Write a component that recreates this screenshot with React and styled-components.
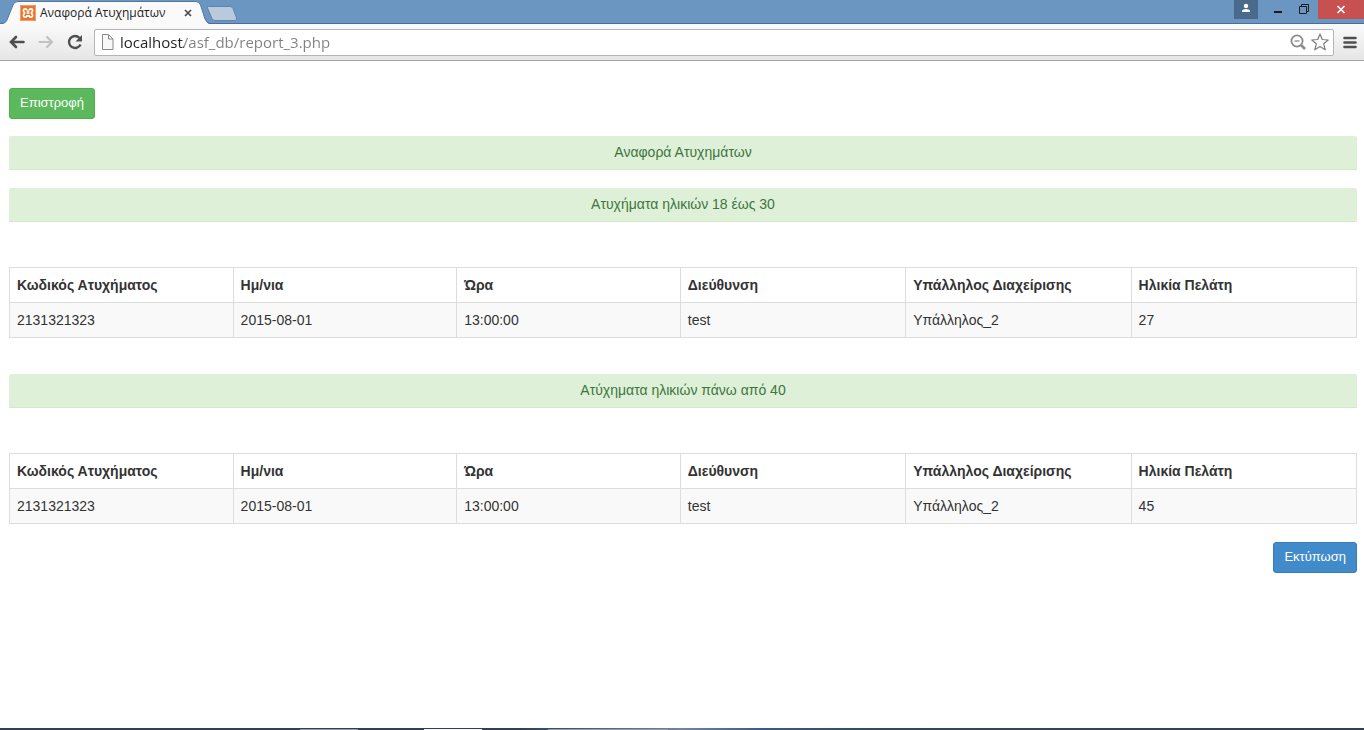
import React, {useState} from 'react'
import styled, {createGlobalStyle} from 'styled-components'

const GlobalStyle = createGlobalStyle `
  * {
    box-sizing: border-box;
  }
  body {
    margin: 0;
    background: #fff;
    color: #333;
    font: 14px/20px "Liberation Sans", Arial, sans-serif;
  }
`

const Window = styled.div `
  display: flex;
  flex-direction: column;
  min-height: 100vh;
`

/* Browser chrome */

const TitleBar = styled.header `
  display: flex;
  justify-content: space-between;
  height: 24px;
  background: #6b96c1;
  box-shadow: inset 0 -1px #466f9c;
`

const TabStrip = styled.div `
  display: flex;
  align-items: flex-end;
`

const TabEdge = styled.svg `
  display: block;
  flex: none;
  overflow: visible;
  width: ${p => p.width}px;
  height: 24px;
`

const Tab = styled.div `
  display: flex;
  align-items: center;
  width: 176px;
  height: 23px;
  background: #fafafa;
  border-top: 1px solid #54789f;
  font: 12px/20px "Open Sans", "Noto Sans", sans-serif;
  color: #222;
`

const TabTitle = styled.span `
  flex: 1;
  margin-left: 4px;
  white-space: nowrap;
`

const IconButton = styled.button `
  display: flex;
  align-items: center;
  justify-content: center;
  flex: none;
  width: ${p => p.$width}px;
  height: ${p => p.$height || 24}px;
  padding: 0;
  border: 0;
  background: ${p => p.$background || 'none'};
`

const WindowControls = styled.div `
  display: flex;
  align-items: flex-start;
`

const Toolbar = styled.div `
  display: flex;
  align-items: center;
  height: 37px;
  padding: 0 2px 0 3px;
  background: linear-gradient(#fafafa, #e6e6e6);
  border-bottom: 1px solid #a3a3a3;
`

const AddressBar = styled.div `
  display: flex;
  align-items: center;
  flex: 1;
  height: 27px;
  margin: 0 4px 0 5px;
  padding: 0 2px 0 6px;
  background: #fff;
  border: 1px solid #b5b5b5;
  border-radius: 2px;
`

/* The host part is darker than the path */
const Address = styled.input `
  flex: 1;
  min-width: 0;
  height: 24px;
  margin-left: 6px;
  padding: 0;
  border: 0;
  outline: 0;
  background: linear-gradient(90deg, #222 64px, #808080 64px);
  background-clip: text;
  -webkit-background-clip: text;
  -webkit-text-fill-color: transparent;
  color: #222;
  font: 15px/24px "Open Sans", "Noto Sans", sans-serif;
`

/* Report page */

const Page = styled.main `
  flex: 1;
  padding: 27px 7px 18px 9px;
`

const Button = styled.button `
  display: block;
  height: 31px;
  margin-left: ${p => p.$right ? 'auto' : '0'};
  padding: 0 10px 2px;
  border: 1px solid ${p => p.$primary ? '#357ebd' : '#4cae4c'};
  border-radius: 3px;
  background: ${p => p.$primary ? '#428bca' : '#5cb85c'};
  color: #fff;
  font: 13px/20px "Liberation Sans", Arial, sans-serif;
`

const Heading = styled.div `
  height: 34px;
  margin-top: ${p => p.$gap || 18}px;
  padding: 6px;
  background: #dff0d8;
  border-bottom: 1px solid #d6e9c6;
  border-radius: 2px 2px 0 0;
  color: #3c763d;
  text-align: center;
`

const Table = styled.table `
  width: 100%;
  margin: 45px 0 0;
  border-collapse: collapse;
  table-layout: fixed;
`

const Th = styled.th `
  padding: 7px;
  border: 1px solid #ddd;
  text-align: left;

  &:nth-child(-n + 3) {
    width: 16.6%;
  }
`

const Td = styled.td `
  padding: 7px;
  border: 1px solid #ddd;
  background: #f9f9f9;
`

const Actions = styled.div `
  margin-top: 18px;
`

const Taskbar = styled.footer `
  display: flex;
  height: 2px;
  padding-left: 300px;
  gap: 66px;
  background: linear-gradient(90deg, #2f4152 0 38%, #33506a 40%, #6f86a3 50%, #3a5b7d 56%, #2f4a5a 65%, #2b4250);
`

const TaskItem = styled.span `
  width: ${p => p.$wide ? 120 : 58}px;
  height: 1px;
  margin-top: 1px;
  background: ${p => p.$active ? '#f4f6f7' : '#8f9daa'};
`

const columns = [
  'Κωδικός Ατυχήματος',
  'Ημ/νια',
  'Ώρα',
  'Διεύθυνση',
  'Υπάλληλος Διαχείρισης',
  'Ηλικία Πελάτη'
]

const youngRows = [
  ['2131321323', '2015-08-01', '13:00:00', 'test', 'Υπάλληλος_2', '27']
]

const olderRows = [
  ['2131321323', '2015-08-01', '13:00:00', 'test', 'Υπάλληλος_2', '45']
]

const ReportTable = ({rows, label}) => <Table aria-label={label}>
  <thead>
    <tr>
      {columns.map(name => <Th key={name} scope="col">{name}</Th>)}
    </tr>
  </thead>
  <tbody>
    {
      rows.map((row, index) => <tr key={index}>
        {row.map((value, i) => <Td key={i}>{value}</Td>)}
      </tr>)
    }
  </tbody>
</Table>

const XamppIcon = () => <svg width="16" height="16" viewBox="0 0 16 16">
  <rect width="16" height="16" rx="1" fill="#e9752a"/>
  <rect x=".5" y=".5" width="15" height="15" rx="1" fill="none" stroke="#f0a068"/>
  <path d="M6.8 5.2C6.6 3.4 3.6 3.2 3.4 5.4C3.3 6.8 4.6 7.2 4.6 8C4.6 8.800 3.3 9.200 3.400 10.600C3.600 12.800 6.600 12.600 6.800 10.800H9.200C9.400 12.600 12.400 12.800 12.600 10.600C12.700 9.200 11.400 8.800 11.400 8C11.400 7.200 12.700 6.800 12.600 5.400C12.400 3.200 9.400 3.400 9.200 5.200" fill="none" stroke="#fff" strokeWidth="1.7" strokeLinejoin="round"/>
  <path d="M6.500 5.400L8 6.500L9.500 5.400M6.500 8H9.500" fill="none" stroke="#fff" strokeWidth="1.3"/>
</svg>

const Chrome = () => {
  let [address, setAddress] = useState('localhost/asf_db/report_3.php')
  return (<>
    <TitleBar>
      <TabStrip>
        <TabEdge width={20} viewBox="0 0 20 24">
          <path d="M0 24C5 24 6 22 7 20L13 5Q14 1.5 18 1.5H20V24Z" fill="#fafafa"/>
          <path d="M0 23.5C5 23.5 6 22 7 20L13 5Q14 1.5 18 1.5H20" fill="none" stroke="#54789f"/>
        </TabEdge>
        <Tab>
          <XamppIcon/>
          <TabTitle>Αναφορά Ατυχημάτων</TabTitle>
          <IconButton $width={16} $height={20} aria-label="Close tab">
            <svg width="8" height="8" viewBox="0 0 8 8">
              <path d="M1 1L7 7M7 1L1 7" stroke="#4a4a4a" strokeWidth="1.7"/>
            </svg>
          </IconButton>
        </Tab>
        <TabEdge width={10} viewBox="0 0 10 24">
          <path d="M0 1.5Q3 1.5 4.5 5L9 19Q11 24 14 24H0Z" fill="#fafafa"/>
          <path d="M0 1.5Q3 1.5 4.5 5L9 19Q11 23.5 14 23.5" fill="none" stroke="#54789f"/>
        </TabEdge>
        <IconButton $width={32} aria-label="New tab">
          <svg width="32" height="24" viewBox="0 0 32 24">
            <path d="M2.500 6.500H24Q26 6.500 27 8.500L30.500 18Q31 20.500 29 20.500H9Q7 20.500 6 18.500L1.500 8Q1 6.500 2.500 6.500Z" fill="#b9cadc" stroke="#6085ad"/>
          </svg>
        </IconButton>
      </TabStrip>
      <WindowControls>
        <IconButton $width={24} $height={19} $background="#4a6a8b" aria-label="Profile">
          <svg width="24" height="19" viewBox="0 0 24 19">
            <circle cx="12" cy="6" r="2.2" fill="#fff"/>
            <path d="M8 12V10.5Q9 9 12 9T16 10.5V12Z" fill="#fff"/>
          </svg>
        </IconButton>
        <IconButton $width={34} $height={19} aria-label="Minimize">
          <svg width="34" height="19" viewBox="0 0 34 19">
            <path d="M16 12H24" stroke="#1c1c1c" strokeWidth="2"/>
          </svg>
        </IconButton>
        <IconButton $width={26} $height={19} aria-label="Restore">
          <svg width="26" height="19" viewBox="0 0 26 19">
            <path d="M7.5 6.500H14.500V13.500H7.500ZM9.500 6V4.500H16.500V11.500H15" fill="none" stroke="#1c1c1c"/>
          </svg>
        </IconButton>
        <IconButton $width={46} $height={19} $background="#c75050" aria-label="Close">
          <svg width="46" height="19" viewBox="0 0 46 19">
            <path d="M19.5 6L26.5 13M26.5 6L19.5 13" stroke="#fff" strokeWidth="1.7"/>
          </svg>
        </IconButton>
      </WindowControls>
    </TitleBar>
    <Toolbar>
      <IconButton $width={28} aria-label="Back">
        <svg width="18" height="16" viewBox="0 0 18 16">
          <path d="M15.500 8H3.500M8 3L3 8L8 13" fill="none" stroke="#4f4f4f" strokeWidth="2.6" strokeLinecap="round"/>
        </svg>
      </IconButton>
      <IconButton $width={30} aria-label="Forward">
        <svg width="18" height="16" viewBox="0 0 18 16">
          <path d="M2.500 8H14.500M10 3L15 8L10 13" fill="none" stroke="#c2c2c2" strokeWidth="2.2" strokeLinecap="round"/>
        </svg>
      </IconButton>
      <IconButton $width={28} aria-label="Reload">
        <svg width="16" height="16" viewBox="0 0 16 16">
          <path d="M12.5 4A6 6 0 1 0 13.5 10.5" fill="none" stroke="#4f4f4f" strokeWidth="2.4"/>
          <path d="M15 1V7.5H8.5Z" fill="#4f4f4f"/>
        </svg>
      </IconButton>
      <AddressBar>
        <svg width="13" height="16" viewBox="0 0 13 16">
          <path d="M1.500 .5H7.500L12 5V15.500H1.500Z" fill="#f8f8f8" stroke="#8a8a8a"/>
          <path d="M7.500 .5V5H12" fill="none" stroke="#8a8a8a"/>
        </svg>
        <Address aria-label="Address" value={address} spellCheck={false} onChange={e => setAddress(e.target.value)}/>
        <IconButton $width={22} aria-label="Zoom">
          <svg width="16" height="16" viewBox="0 0 16 16">
            <circle cx="7" cy="7" r="5.6" fill="none" stroke="#8c8c8c" strokeWidth="1.8"/>
            <path d="M4.500 7H9.500" stroke="#8c8c8c" strokeWidth="1.3"/>
            <path d="M11 11L15 15" stroke="#8c8c8c" strokeWidth="2.6"/>
          </svg>
        </IconButton>
        <IconButton $width={22} aria-label="Bookmark">
          <svg width="18" height="18" viewBox="0 0 18 18">
            <path d="M9 1L11.2 6.5L17.2 7L12.7 10.8L14.2 16.8L9 13.6L3.8 16.8L5.3 10.8L.8 7L6.8 6.5Z" fill="none" stroke="#7d7d7d" strokeWidth="1.2" strokeLinejoin="round"/>
          </svg>
        </IconButton>
      </AddressBar>
      <IconButton $width={24} aria-label="Menu">
        <svg width="14" height="14" viewBox="0 0 14 14">
          <path d="M1.5 3H12.500M1.500 7.500H12.500M1.500 12H12.500" stroke="#4f4f4f" strokeWidth="2.6" strokeLinecap="round"/>
        </svg>
      </IconButton>
    </Toolbar>
  </>)
}

const App = () => <Window>
  <GlobalStyle/>
  <Chrome/>
  <Page>
    <Button type="button">Επιστροφή</Button>
    <Heading $gap={17}>Αναφορά Ατυχημάτων</Heading>
    <Heading>Ατυχήματα ηλικιών 18 έως 30</Heading>
    <ReportTable rows={youngRows} label="Ατυχήματα ηλικιών 18 έως 30"/>
    <Heading $gap={36}>Ατύχηματα ηλικιών πάνω από 40</Heading>
    <ReportTable rows={olderRows} label="Ατύχηματα ηλικιών πάνω από 40"/>
    <Actions>
      <Button type="button" $primary $right onClick={() => window.print()}>Εκτύπωση</Button>
    </Actions>
  </Page>
  <Taskbar>
    <TaskItem/>
    <TaskItem $active/>
    <TaskItem $wide/>
  </Taskbar>
</Window>

export default App
